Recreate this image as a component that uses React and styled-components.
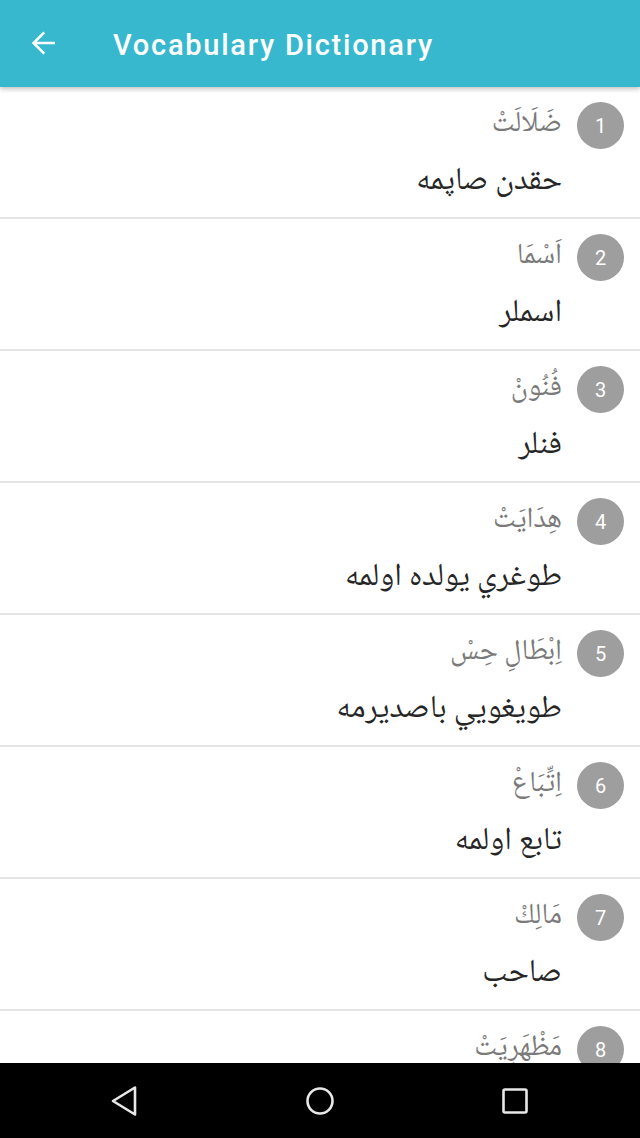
import React from 'react';
import styled, { createGlobalStyle } from 'styled-components';

const GlobalStyle = createGlobalStyle`
  html, body {
    margin: 0;
    padding: 0;
    background: #ffffff;
  }
  body {
    font-family: Roboto, 'Noto Sans', sans-serif;
  }
`;

const words = [
  { word: 'ضَلَالَتْ', meaning: 'حقدن صاپمه' },
  { word: 'اَسْمَا', meaning: 'اسملر' },
  { word: 'فُنُونْ', meaning: 'فنلر' },
  { word: 'هِدَايَتْ', meaning: 'طوغري يولده اولمه' },
  { word: 'اِبْطَالِ حِسْ', meaning: 'طويغويي باصديرمه' },
  { word: 'اِتِّبَاعْ', meaning: 'تابع اولمه' },
  { word: 'مَالِكْ', meaning: 'صاحب' },
  { word: 'مَظْهَرِيَتْ', meaning: 'مظهر اولمه' },
];

const arabicStack = `'Noto Naskh Arabic', 'Noto Sans Arabic', 'DejaVu Sans', sans-serif`;

const Screen = styled.div`
  width: 640px;
  height: 1138px;
  display: flex;
  flex-direction: column;
  overflow: hidden;
  background: #fff;
`;

const Toolbar = styled.header`
  position: relative;
  z-index: 2;
  height: 87px;
  flex-shrink: 0;
  display: flex;
  align-items: center;
  background: #38b8ce;
  box-shadow: 0 2px 5px rgba(0, 0, 0, 0.25);
`;

const BackButton = styled.div`
  width: 36px;
  height: 36px;
  margin: 0 0 1px 25px;
  display: flex;
`;

const Title = styled.h1`
  margin: 3px 0 0 52px;
  font-family: Roboto, sans-serif;
  font-weight: 500;
  font-size: 29px;
  color: #fff;
  letter-spacing: 1.75px;
`;

const List = styled.main`
  flex: 1;
  overflow: hidden;
`;

const Row = styled.div`
  height: 132px;
  display: flex;
  justify-content: flex-end;
  align-items: flex-start;
  padding: 14px 16px 0 0;
  box-sizing: border-box;
  border-bottom: 2px solid #e4e4e4;
`;

const TextCol = styled.div`
  direction: rtl;
  text-align: right;
  font-family: ${arabicStack};
`;

const Word = styled.div`
  padding-top: 2px;
  font-size: 29px;
  line-height: 44px;
  color: #7a7a7a;
`;

const Meaning = styled.div`
  margin-top: 12px;
  font-size: 32px;
  line-height: 46px;
  color: #262626;
`;

const Badge = styled.div`
  width: 47px;
  height: 47px;
  margin: 1px 0 0 15px;
  border-radius: 50%;
  background: #9e9e9e;
  color: #fff;
  display: flex;
  align-items: center;
  justify-content: center;
  font-family: Roboto, sans-serif;
  font-size: 20px;
  flex-shrink: 0;
`;

const NavBar = styled.nav`
  height: 75px;
  flex-shrink: 0;
  background: #000;
  display: grid;
  grid-template-columns: repeat(3, 1fr);
  align-items: center;
  justify-items: center;
`;

const NavIcon = styled.svg`
  display: block;
  margin-left: ${(p) => p.$shift || 0}px;
`;

const ArrowBack = () => (
  <svg width="36" height="36" viewBox="0 0 24 24">
    <path
      d="M20 11.1H7.83l5.59-5.59L12.2 4.3 4.5 12l7.7 7.7 1.22-1.21L7.83 12.9H20z"
      fill="#fff"
    />
  </svg>
);

export default function App() {
  return (
    <>
      <GlobalStyle />
      <Screen>
        <Toolbar>
          <BackButton>
            <ArrowBack />
          </BackButton>
          <Title>Vocabulary Dictionary</Title>
        </Toolbar>
        <List>
          {words.map((w, i) => (
            <Row key={i}>
              <TextCol>
                <Word>{w.word}</Word>
                <Meaning>{w.meaning}</Meaning>
              </TextCol>
              <Badge>{i + 1}</Badge>
            </Row>
          ))}
        </List>
        <NavBar>
          <NavIcon width="32" height="34" viewBox="0 0 32 34" $shift={35}>
            <path
              d="M27 3.5 L5 17 L27 30.5 Z"
              fill="none"
              stroke="#e8e8e8"
              strokeWidth="2.6"
              strokeLinejoin="round"
            />
          </NavIcon>
          <NavIcon width="32" height="32" viewBox="0 0 32 32">
            <circle cx="16" cy="16" r="12.5" fill="none" stroke="#e8e8e8" strokeWidth="2.6" />
          </NavIcon>
          <NavIcon width="30" height="30" viewBox="0 0 30 30" $shift={-36}>
            <rect x="3.5" y="3.5" width="23" height="23" rx="1.5" fill="none" stroke="#e8e8e8" strokeWidth="2.6" />
          </NavIcon>
        </NavBar>
      </Screen>
    </>
  );
}
